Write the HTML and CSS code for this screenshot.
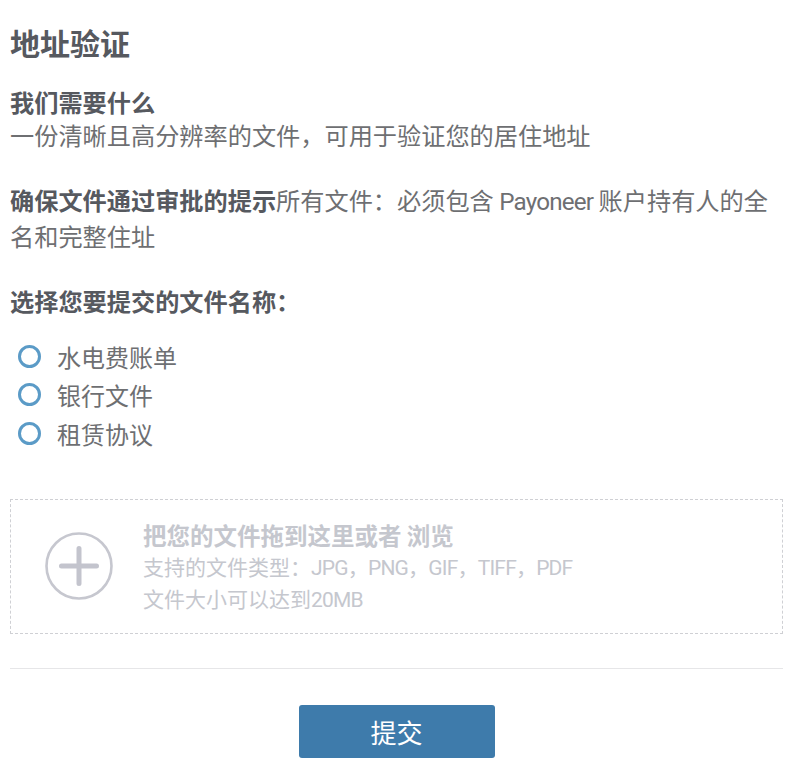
FILE: index.html
```html
<!DOCTYPE html>
<html lang="zh-CN">
<head>
<meta charset="utf-8">
<link rel="stylesheet" href="styles.css">
</head>
<body>
<div class="page">
  <h1 class="title">地址验证</h1>
  <p class="para"><strong class="label">我们需要什么</strong><br>一份清晰且高分辨率的文件，可用于验证您的居住地址</p>
  <p class="para"><strong class="label">确保文件通过审批的提示</strong>所有文件：必须包含 <span class="latin">Payoneer</span> 账户持有人的全名和完整住址</p>
  <p class="para para-last"><strong class="label">选择您要提交的文件名称：</strong></p>
  <ul class="radios">
    <li class="radio"><span class="dot"></span>水电费账单</li>
    <li class="radio"><span class="dot"></span>银行文件</li>
    <li class="radio"><span class="dot"></span>租赁协议</li>
  </ul>
  <div class="drop">
    <svg class="plus" width="70" height="70" viewBox="0 0 70 70">
      <circle cx="35" cy="35" r="32.5" fill="none" stroke="#c6c7cf" stroke-width="2.6"/>
      <path d="M35 17.5V52.5M17.5 35H52.5" stroke="#c3c4cd" stroke-width="5" stroke-linecap="round"/>
    </svg>
    <div class="drop-text">
      <div class="drop-title">把您的文件拖到这里或者 浏览</div>
      <div class="drop-line">支持的文件类型：<span class="latin">JPG，PNG，GIF，TIFF，PDF</span></div>
      <div class="drop-line">文件大小可以达到<span class="latin">20MB</span></div>
    </div>
  </div>
  <hr class="sep">
  <div class="actions"><button class="submit">提交</button></div>
</div>
</body>
</html>
```
FILE: styles.css
```css
html, body {
  margin: 0;
  padding: 0;
  background: #fff;
}
body {
  font-family: "Noto Sans CJK SC", "Roboto", sans-serif;
  color: #6e6f72;
}
.page {
  padding: 22px 7px 0 10px;
}
.title {
  margin: 0 0 23px 0;
  font-size: 30px;
  line-height: 40px;
  font-weight: 700;
  color: #56595f;
}
.para {
  margin: 0 0 32px 0;
  font-size: 24.2px;
  line-height: 33px;
}
.para-last {
  margin-bottom: 20px;
}
.label {
  font-weight: 700;
  color: #56595f;
}
.latin {
  font-family: "Roboto", "Noto Sans CJK SC", sans-serif;
  letter-spacing: -0.8px;
}
.radios {
  list-style: none;
  margin: 0;
  padding: 0;
}
.radio {
  display: flex;
  align-items: center;
  height: 38.5px;
  font-size: 24px;
  color: #6e6f72;
}
.dot {
  box-sizing: border-box;
  width: 23px;
  height: 23px;
  border: 3px solid #5b9bc7;
  border-radius: 50%;
  margin: 0 16px 0 8px;
}
.drop {
  margin-top: 46px;
  height: 135px;
  box-sizing: border-box;
  border: 1px dashed #cfd0d4;
  display: flex;
  align-items: center;
  padding-left: 33px;
}
.plus {
  flex: none;
  margin-right: 29px;
}
.drop-text {
  color: #c5c7ce;
  font-size: 21px;
  line-height: 30.5px;
  margin-top: 4px;
}
.drop-title {
  font-weight: 700;
  font-size: 23.5px;
}
.sep {
  margin: 34px 0 0 0;
  border: 0;
  border-top: 1px solid #e6e6e8;
  height: 0;
}
.actions {
  display: flex;
  justify-content: center;
  padding-top: 36px;
}
.submit {
  width: 196px;
  height: 53px;
  border: 0;
  border-radius: 3px;
  background: #3e7bab;
  color: #fff;
  font-family: "Noto Sans CJK SC", sans-serif;
  font-size: 26px;
  padding: 0;
}
```
